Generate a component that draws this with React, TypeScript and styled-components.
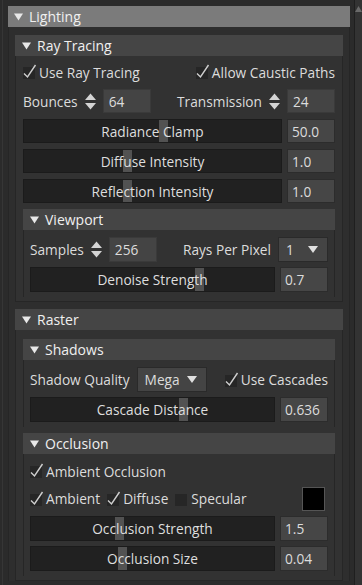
import React from "react";
import styled, { createGlobalStyle } from "styled-components";

const GlobalStyle = createGlobalStyle`
  html, body {
    margin: 0;
    padding: 0;
    background: #2b2b2b;
  }
  body {
    font-family: "Open Sans", "Noto Sans", "Liberation Sans", sans-serif;
    font-size: 13.7px;
    color: #dcdcdc;
  }
`;

type Variant = "top" | "mid" | "sub";

function Section({
  title,
  variant,
  padTop,
  children,
}: {
  title: string;
  variant: Variant;
  padTop?: number;
  children: React.ReactNode;
}) {
  return (
    <SectionWrap>
      <HeaderBar $variant={variant}>
        <svg width="9" height="8" viewBox="0 0 9 8">
          <path d="M0 0.5 H9 L4.5 7.5 Z" fill="#e8e8e8" />
        </svg>
        <span>{title}</span>
      </HeaderBar>
      <Body $variant={variant} $padTop={padTop}>
        {children}
      </Body>
    </SectionWrap>
  );
}

function Checkbox({ label, checked = true }: { label: string; checked?: boolean }) {
  return (
    <CheckItem>
      <svg width="14" height="16" viewBox="0 0 14 16">
        <rect x="0" y="4" width="12" height="12" fill="#262626" />
        {checked && (
          <path
            d="M1 10.5 L4.5 14 L12.5 2"
            fill="none"
            stroke="#cfcfcf"
            strokeWidth="1.4"
          />
        )}
      </svg>
      <span>{label}</span>
    </CheckItem>
  );
}

function SpinField({ label, value }: { label: string; value: string }) {
  return (
    <Group $gap={6}>
      <span>{label}</span>
      <svg width="13" height="19" viewBox="0 0 13 19">
        <path d="M1 8 L6.5 1.5 L12 8 Z" fill="#d4d4d4" />
        <path d="M1 11 H12 L6.5 17.5 Z" fill="#d4d4d4" />
      </svg>
      <InputBox>{value}</InputBox>
    </Group>
  );
}

function Combo({ value, width }: { value: string; width: number }) {
  return (
    <ComboBox $width={width}>
      <span>{value}</span>
      <svg width="10" height="7" viewBox="0 0 10 7">
        <path d="M0 0 H10 L5 7 Z" fill="#e0e0e0" />
      </svg>
    </ComboBox>
  );
}

function Slider({
  label,
  value,
  frac,
  h = 25,
}: {
  label: string;
  value: string;
  frac: number;
  h?: number;
}) {
  return (
    <SliderRow $h={h}>
      <Track>
        <Grab style={{ left: `calc(${frac} * (100% - 9px))` }} />
        <TrackLabel>{label}</TrackLabel>
      </Track>
      <ValueBox>{value}</ValueBox>
    </SliderRow>
  );
}

export default function App() {
  return (
    <>
      <GlobalStyle />
      <Page>
        <Main>
          <Section title="Lighting" variant="top">
            <Section title="Ray Tracing" variant="mid">
              <Row $h={22}>
                <Checkbox label="Use Ray Tracing" />
                <Checkbox label="Allow Caustic Paths" />
              </Row>
              <Row $h={24}>
                <SpinField label="Bounces" value="64" />
                <SpinField label="Transmission" value="24" />
              </Row>
              <Slider label="Radiance Clamp" value="50.0" frac={0.546} h={24} />
              <Slider label="Diffuse Intensity" value="1.0" frac={0.4} h={24} />
              <Slider label="Reflection Intensity" value="1.0" frac={0.4} h={24} />
              <Section title="Viewport" variant="sub">
                <Row $h={25}>
                  <SpinField label="Samples" value="256" />
                  <Group $gap={7}>
                    <span>Rays Per Pixel</span>
                    <Combo value="1" width={50} />
                  </Group>
                </Row>
                <Slider label="Denoise Strength" value="0.7" frac={0.7} />
              </Section>
            </Section>
            <Section title="Raster" variant="mid" padTop={9}>
              <Section title="Shadows" variant="sub">
                <Row $h={25}>
                  <Group $gap={7}>
                    <span>Shadow Quality</span>
                    <Combo value="Mega" width={70} />
                  </Group>
                  <Checkbox label="Use Cascades" />
                </Row>
                <Slider label="Cascade Distance" value="0.636" frac={0.632} />
              </Section>
              <Section title="Occlusion" variant="sub">
                <Row $h={20}>
                  <Checkbox label="Ambient Occlusion" />
                </Row>
                <Row $h={25}>
                  <Checkbox label="Ambient" />
                  <Checkbox label="Diffuse" />
                  <Checkbox label="Specular" checked={false} />
                  <Swatch $color="#000000" />
                </Row>
                <Slider label="Occlusion Strength" value="1.5" frac={0.36} />
                <Slider label="Occlusion Size" value="0.04" frac={0.37} />
              </Section>
            </Section>
          </Section>
        </Main>
        <Scrollbar>
          <svg width="7" height="6" viewBox="0 0 7 6">
            <path d="M0 6 L3.5 0 L7 6 Z" fill="#6a6a6a" />
          </svg>
        </Scrollbar>
      </Page>
    </>
  );
}

const Page = styled.div`
  display: flex;
  width: 362px;
  height: 585px;
  overflow: hidden;
  padding-left: 2px;
  box-sizing: border-box;
  background: #2b2b2b;
`;

const Main = styled.div`
  flex: 1;
  padding: 6px 2px 0 5px;
  border-left: 1px solid #363636;
  overflow: hidden;
`;

const Scrollbar = styled.div`
  width: 7px;
  margin-left: 2px;
  border-left: 1px solid #1f1f1f;
  background: #333333;
  display: flex;
  justify-content: center;
  padding-top: 6px;
  align-items: flex-start;
`;

const SectionWrap = styled.div`
  display: flex;
  flex-direction: column;
`;

const HeaderBar = styled.div<{ $variant: Variant }>`
  height: 21px;
  flex-shrink: 0;
  display: flex;
  align-items: center;
  gap: 6px;
  padding-left: ${(p) => (p.$variant === "top" ? 6 : 7)}px;
  background: ${(p) => (p.$variant === "top" ? "#7b7b7b" : "#454545")};
  color: #f0f0f0;
  font-size: 14px;

  svg {
    margin-top: 1px;
  }
`;

const bodyPadding: Record<Variant, string> = {
  top: "8px 6px 0 6px",
  mid: "5px 7px 4px 7px",
  sub: "7px 6px 5px 6px",
};

const bodyGap: Record<Variant, number> = {
  top: 7,
  mid: 6,
  sub: 5,
};

const Body = styled.div<{ $variant: Variant; $padTop?: number }>`
  display: flex;
  flex-direction: column;
  gap: ${(p) => bodyGap[p.$variant]}px;
  padding: ${(p) => bodyPadding[p.$variant]};
  ${(p) => p.$padTop !== undefined && `padding-top: ${p.$padTop}px;`}
  background: ${(p) => (p.$variant === "top" ? "#2e2e2e" : "#323232")};
  border-left: 1px solid #262626;
  border-right: 1px solid #262626;
  border-bottom: ${(p) => (p.$variant === "mid" ? "1px solid #262626" : "none")};
`;

const Row = styled.div<{ $h: number }>`
  height: ${(p) => p.$h}px;
  flex-shrink: 0;
  display: flex;
  align-items: center;
  justify-content: space-between;
  gap: 7px;
`;

const Group = styled.div<{ $gap: number }>`
  display: flex;
  align-items: center;
  gap: ${(p) => p.$gap}px;
  height: 100%;
`;

const CheckItem = styled.div`
  display: flex;
  align-items: center;
  gap: 2px;

  svg {
    margin-top: -2px;
  }
`;

const InputBox = styled.div`
  width: 48px;
  height: 100%;
  box-sizing: border-box;
  display: flex;
  align-items: center;
  padding-left: 5px;
  background: #444444;
  border: 1px solid #3a3a3a;
`;

const ComboBox = styled.div<{ $width: number }>`
  width: ${(p) => p.$width}px;
  height: 100%;
  box-sizing: border-box;
  display: flex;
  align-items: center;
  justify-content: space-between;
  padding: 0 9px 0 7px;
  background: #444444;
  border: 1px solid #2a2a2a;
`;

const SliderRow = styled.div<{ $h: number }>`
  height: ${(p) => p.$h}px;
  flex-shrink: 0;
  display: flex;
  gap: 5px;
`;

const Track = styled.div`
  position: relative;
  flex: 1;
  display: flex;
  align-items: center;
  justify-content: center;
  background: #212121;
  border: 1px solid #1b1b1b;
`;

const Grab = styled.div`
  position: absolute;
  top: 0;
  bottom: 0;
  width: 9px;
  background: #525252;
`;

const TrackLabel = styled.span`
  position: relative;
  color: #dedede;
`;

const ValueBox = styled.div`
  width: 48px;
  box-sizing: border-box;
  display: flex;
  align-items: center;
  padding-left: 4px;
  background: #464646;
  border: 1px solid #2c2c2c;
`;

const Swatch = styled.div<{ $color: string }>`
  width: 23px;
  height: 24px;
  box-sizing: border-box;
  margin-left: auto;
  margin-right: 3px;
  background: ${(p) => p.$color};
  border: 1px solid #555555;
`;
